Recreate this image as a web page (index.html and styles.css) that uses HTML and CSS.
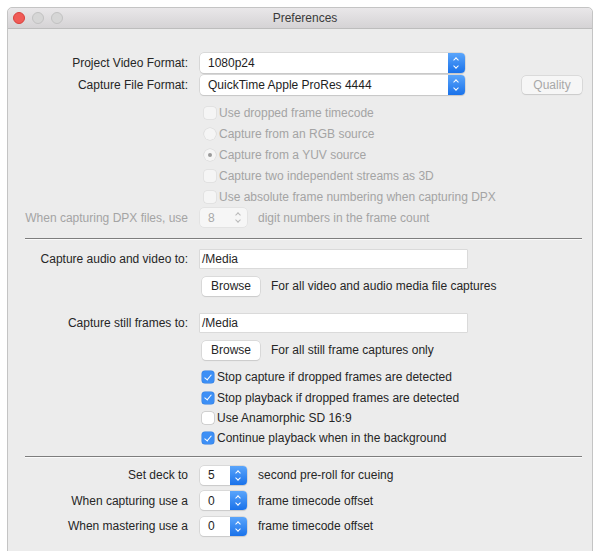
FILE: index.html
```html
<!DOCTYPE html>
<html lang="en">
<head>
    <meta charset="UTF-8">
    <title>Preferences</title>
    <link rel="stylesheet" href="styles.css">
</head>
<body>
    <div class="window">
        <div class="titlebar">
            <div class="lights">
                <span class="light red"></span>
                <span class="light grey"></span>
                <span class="light grey"></span>
            </div>
            <div class="title">Preferences</div>
        </div>

        <div class="section first">
            <div class="row popup-row">
                <label class="label">Project Video Format:</label>
                <div class="popup wide"><span class="val">1080p24</span><span class="cap"></span></div>
            </div>
            <div class="row popup-row">
                <label class="label">Capture File Format:</label>
                <div class="popup wide"><span class="val">QuickTime Apple ProRes 4444</span><span class="cap"></span></div>
                <button class="btn quality">Quality</button>
            </div>

            <div class="opts dim">
                <div class="opt"><span class="box"></span>Use dropped frame timecode</div>
                <div class="opt"><span class="radio"></span>Capture from an RGB source</div>
                <div class="opt"><span class="radio on"></span>Capture from a YUV source</div>
                <div class="opt"><span class="box"></span>Capture two independent streams as 3D</div>
                <div class="opt"><span class="box"></span>Use absolute frame numbering when capturing DPX</div>
            </div>
            <div class="row step-row dim">
                <label class="label">When capturing DPX files, use</label>
                <div class="stepper off"><span class="val">8</span><span class="cap"></span></div>
                <span class="after">digit numbers in the frame count</span>
            </div>
        </div>

        <div class="sep"></div>

        <div class="section second">
            <div class="row field-row">
                <label class="label">Capture audio and video to:</label>
                <div class="field">/Media</div>
            </div>
            <div class="row browse-row">
                <button class="btn browse">Browse</button>
                <span class="after">For all video and audio media file captures</span>
            </div>
            <div class="row field-row gap">
                <label class="label">Capture still frames to:</label>
                <div class="field">/Media</div>
            </div>
            <div class="row browse-row">
                <button class="btn browse">Browse</button>
                <span class="after">For all still frame captures only</span>
            </div>
            <div class="opts checks">
                <div class="opt"><span class="box on"></span>Stop capture if dropped frames are detected</div>
                <div class="opt"><span class="box on"></span>Stop playback if dropped frames are detected</div>
                <div class="opt"><span class="box"></span>Use Anamorphic SD 16:9</div>
                <div class="opt"><span class="box on"></span>Continue playback when in the background</div>
            </div>
        </div>

        <div class="sep lower"></div>

        <div class="section third">
            <div class="row deck-row">
                <label class="label">Set deck to</label>
                <div class="stepper"><span class="val">5</span><span class="cap"></span></div>
                <span class="after">second pre-roll for cueing</span>
            </div>
            <div class="row deck-row">
                <label class="label">When capturing use a</label>
                <div class="stepper"><span class="val">0</span><span class="cap"></span></div>
                <span class="after">frame timecode offset</span>
            </div>
            <div class="row deck-row">
                <label class="label">When mastering use a</label>
                <div class="stepper"><span class="val">0</span><span class="cap"></span></div>
                <span class="after">frame timecode offset</span>
            </div>
        </div>
    </div>
</body>
</html>
```

FILE: styles.css
```css
body {
    margin: 0;
    padding: 7px 0 0 7px;
    background: #ffffff;
    font-family: "Liberation Sans", Arial, sans-serif;
    font-size: 12px;
    color: #262626;
    overflow: hidden;
}
.window {
    width: 586px;
    height: 560px;
    background: #ececec;
    border: 1px solid #c4c4c4;
    border-radius: 5px 5px 0 0;
    box-sizing: border-box;
}
.titlebar {
    height: 20px;
    background: linear-gradient(#e9e7e9, #d5d3d5);
    border-bottom: 1px solid #bdbdbd;
    border-radius: 5px 5px 0 0;
    display: flex;
    align-items: center;
}
.lights {
    display: flex;
    gap: 7px;
    padding-left: 5px;
}
.light {
    width: 12px;
    height: 12px;
    border-radius: 50%;
    box-sizing: border-box;
}
.light.red {
    background: #f05b57;
    border: 0.5px solid #d8413c;
}
.light.grey {
    background: #d6d6d6;
    border: 0.5px solid #c2c2c2;
}
.title {
    flex: 1;
    text-align: center;
    margin-left: -45px;
    font-size: 12px;
    color: #3a3a3a;
}
.row {
    display: flex;
    align-items: center;
}
.label {
    width: 180px;
    text-align: right;
    margin-right: 12px;
    flex: none;
}
.section.first {
    padding-top: 23px;
}
.popup-row {
    height: 22px;
}
.popup {
    height: 20px;
    background: #fff;
    border-radius: 4px;
    box-shadow: 0 0 0 0.5px #c6c6c6, 0 1px 1px rgba(0, 0, 0, 0.15);
    display: flex;
    align-items: center;
    box-sizing: border-box;
}
.popup.wide {
    width: 265px;
}
.popup .val {
    flex: 1;
    padding-left: 8px;
    color: #1e1e1e;
}
.cap {
    width: 17px;
    height: 100%;
    background: linear-gradient(#5aa5fb, #1a72ea);
    border-radius: 0 4px 4px 0;
    position: relative;
}
.cap::before,
.cap::after {
    content: "";
    position: absolute;
    left: 6px;
    width: 3px;
    height: 3px;
    border-left: 1.3px solid #fff;
    border-top: 1.3px solid #fff;
}
.cap::before {
    top: 5px;
    transform: rotate(45deg);
}
.cap::after {
    bottom: 5px;
    transform: rotate(-135deg);
}
.btn {
    font-family: inherit;
    font-size: 12px;
    background: #fff;
    border: none;
    border-radius: 4px;
    box-shadow: 0 0 0 0.5px #c8c8c8, 0 1px 1px rgba(0, 0, 0, 0.12);
    color: #262626;
    padding: 0;
}
.quality {
    margin-left: 57px;
    width: 60px;
    height: 18px;
    color: #a8a8a8;
    background: #f6f6f6;
}
.opts.dim {
    margin-top: 6px;
    padding-left: 196px;
}
.opt {
    height: 21px;
    display: flex;
    align-items: center;
}
.dim {
    color: #a4a4a4;
}
.box {
    width: 12px;
    height: 12px;
    border-radius: 3px;
    background: #fff;
    box-shadow: 0 0 0 0.5px #b4b4b4;
    margin-right: 3px;
    position: relative;
    flex: none;
}
.dim .box {
    background: #f5f5f5;
    box-shadow: 0 0 0 0.5px #d8d8d8;
}
.box.on {
    background: #3d8ff5;
    box-shadow: 0 0 0 0.5px #2a78e0;
}
.box.on::after {
    content: "";
    position: absolute;
    left: 4px;
    top: 1.5px;
    width: 3px;
    height: 6px;
    border-right: 1.6px solid #fff;
    border-bottom: 1.6px solid #fff;
    transform: rotate(40deg);
}
.radio {
    width: 12px;
    height: 12px;
    border-radius: 50%;
    background: #f5f5f5;
    box-shadow: 0 0 0 0.5px #d4d4d4;
    margin-right: 3px;
    position: relative;
    flex: none;
}
.radio.on::after {
    content: "";
    position: absolute;
    left: 4px;
    top: 4px;
    width: 4px;
    height: 4px;
    border-radius: 50%;
    background: #9a9a9a;
}
.step-row {
    height: 21px;
}
.stepper {
    width: 47px;
    height: 19px;
    background: #fff;
    border-radius: 4px;
    box-shadow: 0 0 0 0.5px #c6c6c6, 0 1px 1px rgba(0, 0, 0, 0.12);
    display: flex;
    align-items: center;
    box-sizing: border-box;
}
.stepper .val {
    flex: 1;
    padding-left: 8px;
    color: #1e1e1e;
}
.stepper.off {
    background: #f6f6f6;
    box-shadow: 0 0 0 0.5px #dadada;
}
.stepper.off .val {
    color: #a8a8a8;
}
.stepper.off .cap {
    background: none;
}
.stepper.off .cap::before,
.stepper.off .cap::after {
    border-color: #b8b8b8;
}
.after {
    margin-left: 11px;
}
.sep {
    margin: 10px 10px 0 17px;
    height: 1px;
    background: #7d7d7d;
    border-bottom: 1px solid #fafafa;
}
.sep.lower {
    margin-top: 7px;
}
.section.second {
    padding-top: 8px;
}
.field-row {
    height: 22px;
}
.field-row.gap {
    margin-top: 13px;
}
.field {
    width: 267px;
    height: 18px;
    background: #fff;
    box-shadow: 0 0 0 0.5px #c8c8c8;
    box-sizing: border-box;
    padding-left: 2px;
    line-height: 18px;
}
.browse-row {
    height: 26px;
    margin-top: 3px;
    padding-left: 194px;
}
.browse {
    width: 58px;
    height: 19px;
}
.opts.checks {
    padding-left: 194px;
    margin-top: 4px;
}
.checks .opt {
    height: 20.4px;
}
.section.third {
    padding-top: 5px;
}
.deck-row {
    height: 25.5px;
}
```
